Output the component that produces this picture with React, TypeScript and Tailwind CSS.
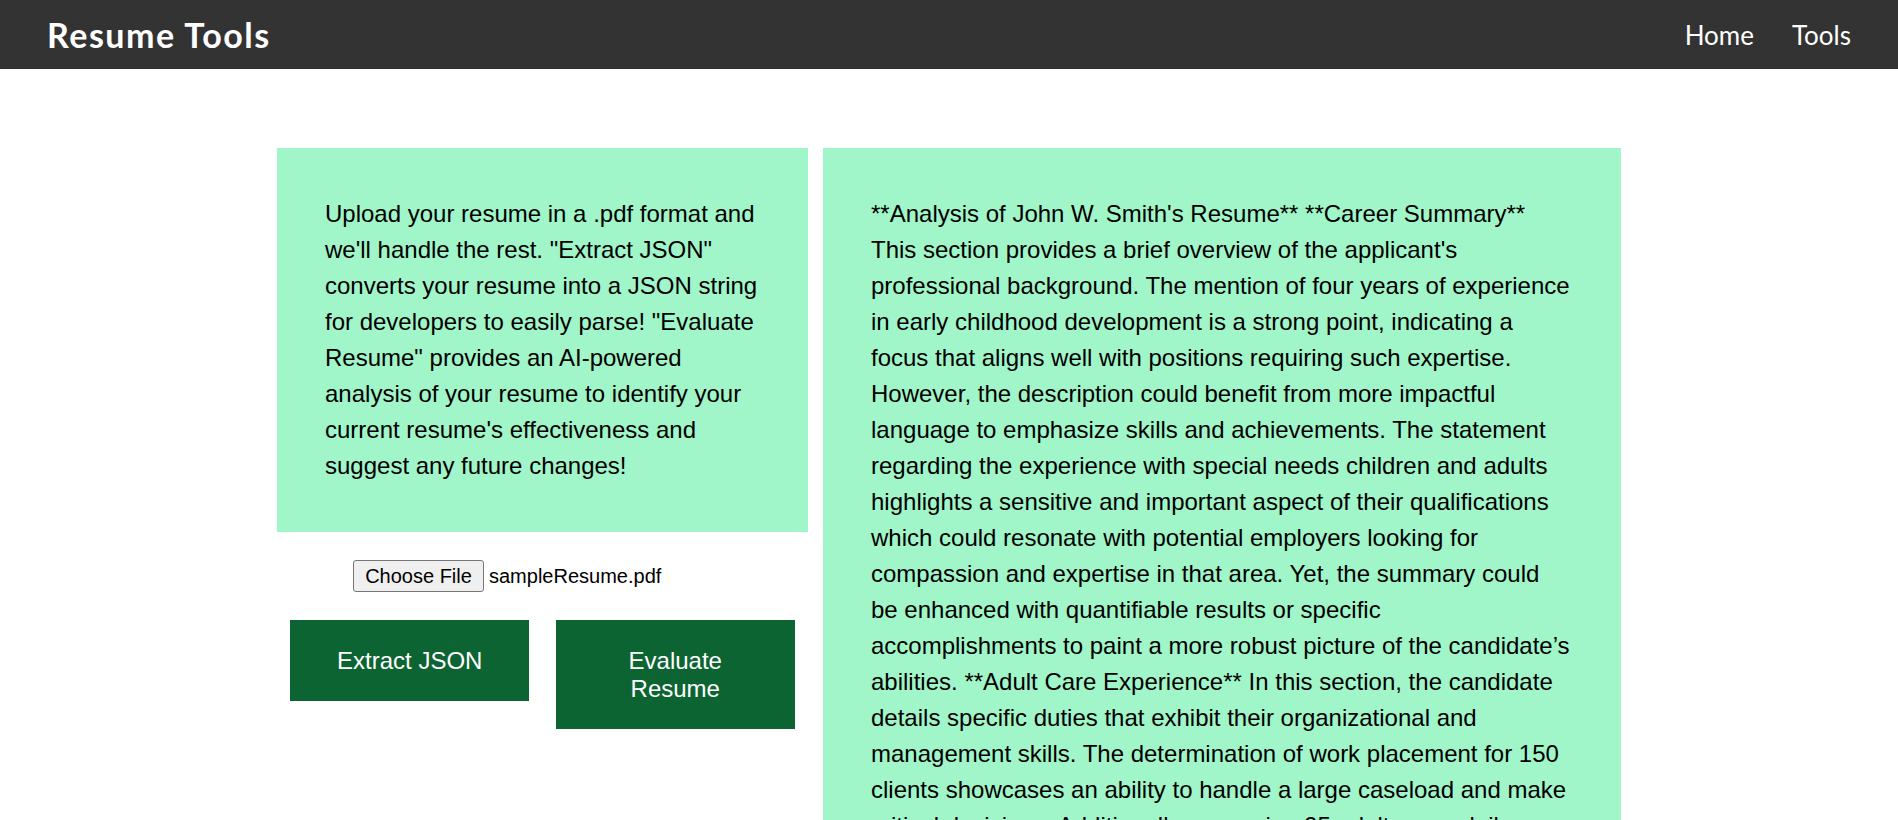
import React from "react";

const analysis =
  "**Analysis of John W. Smith's Resume** **Career Summary** This section provides a brief overview of the applicant's professional background. The mention of four years of experience in early childhood development is a strong point, indicating a focus that aligns well with positions requiring such expertise. However, the description could benefit from more impactful language to emphasize skills and achievements. The statement regarding the experience with special needs children and adults highlights a sensitive and important aspect of their qualifications which could resonate with potential employers looking for compassion and expertise in that area. Yet, the summary could be enhanced with quantifiable results or specific accomplishments to paint a more robust picture of the candidate\u2019s abilities. **Adult Care Experience** In this section, the candidate details specific duties that exhibit their organizational and management skills. The determination of work placement for 150 clients showcases an ability to handle a large caseload and make critical decisions. Additionally, managing 25 adults on a daily basis demonstrates leadership and the capacity to coordinate care effectively. However, this section could be strengthened by describing outcomes, such as improvements in client satisfaction or successful placements.";

export default function App() {
  return (
    <div className="min-h-screen bg-white font-['Liberation_Sans',Arial,sans-serif] text-black">
      <header className="h-[69px] bg-[#333333] flex items-center justify-between px-[47px]">
        <h1 className="font-['Lato',sans-serif] font-bold text-[34px] leading-none text-white tracking-[1.5px]">
          Resume Tools
        </h1>
        <nav className="flex items-center gap-[38px] font-['Lato',sans-serif] text-[26px] leading-none text-white">
          <a>Home</a>
          <a>Tools</a>
        </nav>
      </header>

      <main className="flex justify-center gap-[15px] pt-[79px]">
        <div className="w-[531px] flex flex-col">
          <div className="bg-[#a0f5c9] p-12 text-[24px] leading-[36px]">
            Upload your resume in a .pdf format and we'll handle the rest. "Extract JSON" converts your resume into a JSON
            string for developers to easily parse! "Evaluate Resume" provides an AI-powered analysis of your resume to
            identify your current resume's effectiveness and suggest any future changes!
          </div>

          <div className="mt-[28px] pl-[76px] flex items-center gap-[5px] text-[20px]">
            <span className="w-[131px] h-[32px] flex items-center justify-center bg-[#efefef] border border-[#767676] rounded-[3px]">
              Choose File
            </span>
            <span>sampleResume.pdf</span>
          </div>

          <div className="mt-[28px] grid grid-cols-2 items-start">
            <button className="mx-auto w-[239px] bg-[#0c6433] text-white text-[24px] leading-[28px] py-[26.5px] px-[32px] text-center">
              Extract JSON
            </button>
            <button className="mx-auto w-[239px] bg-[#0c6433] text-white text-[24px] leading-[28px] py-[26.5px] px-[32px] text-center">
              Evaluate Resume
            </button>
          </div>
        </div>

        <div className="w-[798px] bg-[#a0f5c9] pt-12 pb-12 pl-12 pr-[50px] text-[24px] leading-[36px] self-start">
          {analysis}
        </div>
      </main>
    </div>
  );
}
